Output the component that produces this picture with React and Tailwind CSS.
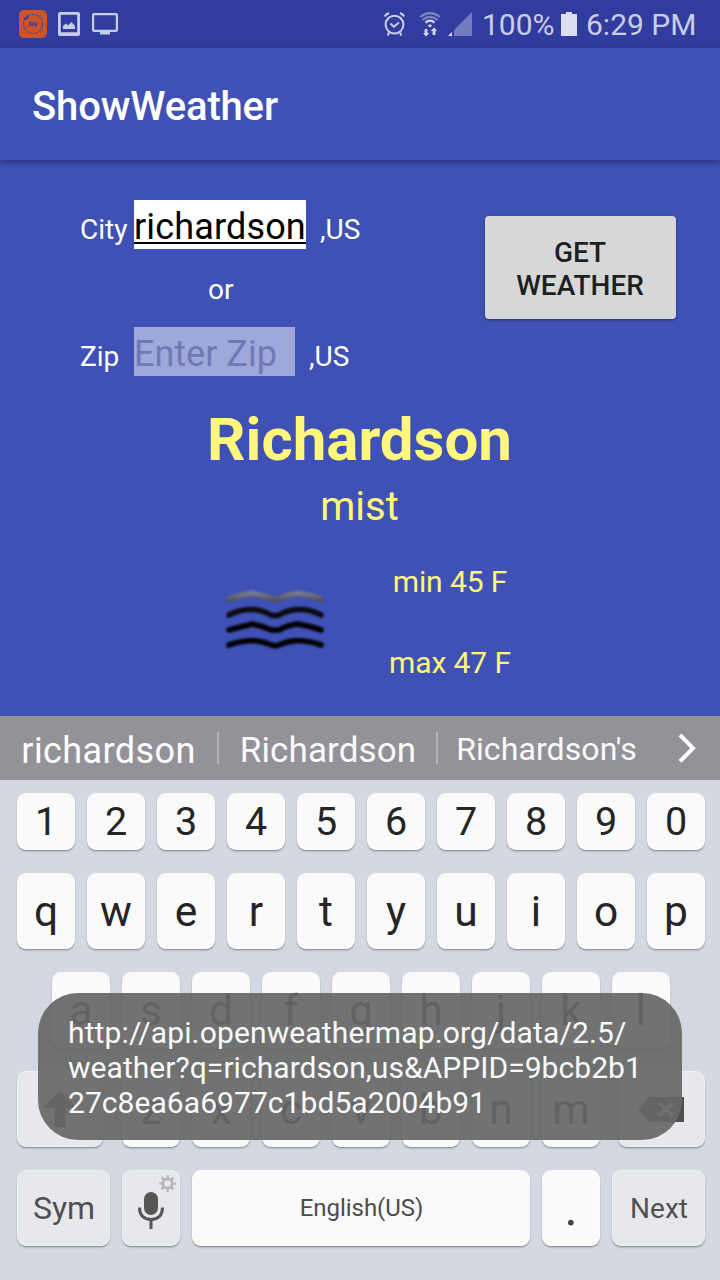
import React from "react";

function StatusBar() {
  return (
    <div className="flex h-12 items-start bg-[#303d9f] text-[30px] leading-[50px] text-[#cbcee6]">
      <svg className="ml-[19px] mt-[10px]" width="28" height="28" viewBox="0 0 28 28">
        <rect width="28" height="28" rx="5" fill="#cc542b" />
        <circle cx="14" cy="14" r="9.5" fill="none" stroke="#303d9f" strokeWidth="0.9" strokeDasharray="3.6 1.1" />
        <path d="M5.5 9.5 9.5 6" stroke="#303d9f" strokeWidth="2.2" />
        <path d="M10.500 16.200v-3.700h3v3.700M12 13.500v2.700M15.200 16.200v-3.700l1.600 2v1.700M17.700 12.200v4" fill="none" stroke="#303d9f" strokeWidth="1" />
      </svg>
      <svg className="ml-[11px] mt-3" width="22" height="24" viewBox="0 0 22 24">
        <path fillRule="evenodd" fill="#c9cce6" d="M2 0h18a2 2 0 0 1 2 2v20a2 2 0 0 1-2 2H2a2 2 0 0 1-2-2V2a2 2 0 0 1 2-2Zm.8 2.8v17.4h16.4V2.8Z" />
        <path fill="#c9cce6" d="M5 17v-3l3-2.5 2 2 3.5-3.5 3.5 4v3Z" />
      </svg>
      <svg className="ml-3 mt-[13px]" width="26" height="22" viewBox="0 0 26 22">
        <path fillRule="evenodd" fill="#c9cce6" d="M2 0h22a2 2 0 0 1 2 2v15a2 2 0 0 1-2 2h-6v2.5H8V19H2a2 2 0 0 1-2-2V2a2 2 0 0 1 2-2Zm.2 2.2v14.5h21.6V2.2Z" />
      </svg>

      <svg className="ml-[266px] mt-3" width="21" height="24" viewBox="0 0 21 24" fill="none" stroke="#cfd2e9">
        <circle cx="10.5" cy="12.6" r="8.9" strokeWidth="2" />
        <path d="m6.5 11.5 3.3 3.3 5.2-4.4" strokeWidth="1.9" />
        <path d="M.8 4.5Q2 2 5 1M20.2 4.5Q19 2 16 1M5 20.5l-1.3 3M16 20.5l1.3 3" strokeWidth="2" />
      </svg>
      <svg className="ml-[14px] mt-[11px]" width="22" height="26" viewBox="0 0 22 26" fill="none">
        <path d="M1 6Q11-1.8 21 6M3.4 9Q11 2.8 18.6 9" stroke="#7b84c4" strokeWidth="2" />
        <path d="M6.5 11.6Q11 7.6 15.5 11.6" stroke="#d5d7ec" strokeWidth="2.2" />
        <path d="M8.8 14.4Q11 12.4 13.2 14.4L11 16.6Z" fill="#d5d7ec" />
        <path d="M5.600 18h2.800v4H10.200l-3.200 3.400L4 22h1.600ZM13.600 24v-4H11.800l3.200-3.600 3.200 3.600h-1.800v4Z" fill="#d5d7ec" />
      </svg>
      <svg className="ml-[7px] mt-3" width="24" height="24" viewBox="0 0 24 24">
        <path d="M24 0v24H6V18Z" fill="#737cc0" />
        <path d="M4 20v4H0Z" fill="#dddff0" />
      </svg>
      <span className="ml-[10px] w-[73px]">100%</span>
      <svg className="ml-[6px] mt-3" width="16" height="24" viewBox="0 0 16 24">
        <path d="M5 0h6v2h5v22H0V2h5Z" fill="#dddff0" />
      </svg>
      <span className="ml-[9px] whitespace-nowrap">6:29 PM</span>
    </div>
  );
}

function AppBar() {
  return (
    <header className="relative h-28 bg-[#3f51b5] px-8 text-[40px] font-medium leading-[118px] tracking-[-0.15px] text-white shadow-[0_2px_6px_rgba(0,0,0,0.4)]">
      ShowWeather
    </header>
  );
}

function SearchForm() {
  return (
    <section className="flex h-[242px] text-[28px] text-white">
      <div className="w-[485px] pl-20 pt-10">
        <div className="flex h-[49px] items-baseline">
          <span className="w-[54px]">City</span>
          <div className="relative h-[49px] w-[172px] whitespace-nowrap bg-white text-[36px] leading-[55px] tracking-[0.15px] text-black">
            richardson
            <div className="absolute left-0 top-[42px] h-[2px] w-full bg-black" />
          </div>
          <span className="ml-[14px]">,US</span>
        </div>
        <div className="h-[78px] pl-32 leading-[81px]">or</div>
        <div className="flex h-[49px] items-baseline">
          <span className="w-[54px]">Zip</span>
          <div className="h-[49px] w-[161px] whitespace-nowrap bg-[#9fa8da] text-[36px] leading-[55px] text-[#6f7ab4]">
            Enter Zip
          </div>
          <span className="ml-[14px]">,US</span>
        </div>
      </div>
      <button className="mt-14 h-[103px] w-[191px] rounded-[4px] bg-[#d6d8d7] pr-px pt-[2px] text-[28px] font-medium leading-[33px] text-[#1e1f1f] shadow-[0_1px_3px_rgba(0,0,0,0.35)]">
        GET
        <br />
        WEATHER
      </button>
    </section>
  );
}

function MistIcon() {
  return (
    <svg className="ml-[222px] mt-5 blur-[0.8px]" width="106" height="72" viewBox="0 0 106 72" fill="none" strokeWidth="5.6" strokeLinecap="round" strokeLinejoin="round">
      <defs>
        <linearGradient id="haze" x1="0" y1="6" x2="0" y2="17" gradientUnits="userSpaceOnUse">
          <stop offset="0" stopColor="#8588a4" />
          <stop offset="0.5" stopColor="#6f6f78" />
          <stop offset="1" stopColor="#4c4c50" />
        </linearGradient>
      </defs>
      <path d="M7 15Q18 11 30.500 9.500Q42 12 48 14.500Q53 16 58 14.500Q66 11 75.500 9.500Q88 11 99 15" stroke="url(#haze)" />
      <path d="M7 31Q18 25 30.500 25.500Q40 26 48 30.500Q53 33 58 30.500Q66 26 75.500 25.500Q88 25 99 31" stroke="#0b0b10" />
      <path d="M7 46Q18 43 30.500 40Q40 42 48 45.500Q53 47 58 45.500Q66 41 75.500 40Q88 42 99 46" stroke="#020204" />
      <path d="M7 61Q18 57 30.500 56.500Q40 57 48 60.500Q53 63 58 60.500Q66 57 75.500 56.500Q88 57 99 61" stroke="#020204" />
    </svg>
  );
}

function Result() {
  return (
    <section className="h-[314px] text-center text-[#fff67c]">
      <h1 className="pr-px pt-[2px] text-[60px] font-bold leading-[72px]">Richardson</h1>
      <p className="mt-[7px] pr-px text-[40px] leading-[48px]">mist</p>
      <div className="mt-[33px] flex text-[30px] leading-[35px]">
        <MistIcon />
        <div className="ml-[42px] flex w-[160px] flex-col gap-[46px] tracking-[-0.1px]">
          <p>min 45 F</p>
          <p>max 47 F</p>
        </div>
      </div>
    </section>
  );
}

function Suggestions() {
  return (
    <div className="flex h-16 items-start bg-[#949299] text-[#fafafa]">
      <span className="w-[217px] text-center text-[36px] leading-[70px] tracking-[0.4px] text-white">richardson</span>
      <i className="mt-4 h-8 w-[2px] bg-[#b2b1b4]" />
      <span className="w-[217px] pl-px text-center text-[35px] leading-[69px] tracking-[0.1px]">Richardson</span>
      <i className="mt-4 h-8 w-[2px] bg-[#b2b1b4]" />
      <span className="w-[217px] text-center text-[32px] leading-[67px] tracking-[0.1px]">Richardson's</span>
      <svg className="ml-[22px] mt-[17px]" width="20" height="31" viewBox="0 0 20 31" fill="none">
        <path d="m3 2 13 13.200-13 13.200" stroke="#fff" strokeWidth="4" />
      </svg>
    </div>
  );
}

const keyBase =
  "relative shrink-0 rounded-[9px] text-center shadow-[0_1px_1px_#8f9197,0_2px_2px_rgba(0,0,0,0.12),inset_0_0_0_1px_rgba(255,255,255,0.35)] ";

function Key({ className, children }) {
  return <div className={keyBase + className}>{children}</div>;
}

function LetterKeys({ letters }) {
  return [...letters].map((c) => (
    <Key key={c} className="h-19 w-[58px] bg-[#fafafa] text-[42.5px] leading-[78px] text-[#252525]">
      {c}
    </Key>
  ));
}

function Keyboard() {
  return (
    <div className="h-[500px] bg-[#d5d8e0] pl-[17px] pt-[13px]">
      <div className="flex gap-3">
        {[..."1234567890"].map((c) => (
          <Key key={c} className="h-[57px] w-[58px] bg-[#fafafa] text-[39.5px] leading-[58px] text-[#252525]">
            {c}
          </Key>
        ))}
      </div>
      <div className="mt-[23px] flex gap-3">
        <LetterKeys letters="qwertyuiop" />
      </div>
      <div className="mt-[23px] flex gap-3 pl-[35px]">
        <LetterKeys letters="asdfghjkl" />
      </div>
      <div className="mt-[23px] flex gap-3">
        <Key className="mr-[7px] h-19 w-[86px] bg-[#e7e8ec]">
          <svg className="ml-[26px] mt-5" width="34" height="36" viewBox="0 0 34 36">
            <path d="M17 0 34 17H22.500V36h-11V17H0Z" fill="#4f4f4f" />
          </svg>
        </Key>
        <LetterKeys letters="zxcvbnm" />
        <Key className="ml-[6px] h-19 w-[87px] bg-[#e7e8ec]">
          <svg className="ml-5 mt-[26px]" width="46" height="25" viewBox="0 0 46 25">
            <path d="M11 0h35v25H11L0 12.500Z" fill="#4f4f4f" />
            <path d="m21 6 14 13M35 6 21 19" stroke="#e7e8ec" strokeWidth="3.500" />
          </svg>
        </Key>
      </div>
      <div className="mt-[23px] flex gap-3">
        <Key className="h-19 w-[93px] bg-[#e7e8ec] pl-px text-[32px] leading-[77px] text-[#505050]">Sym</Key>
        <Key className="h-19 w-[58px] bg-[#e7e8ec]">
          <svg width="58" height="76" viewBox="0 0 58 76" fill="none">
            <rect x="22" y="22" width="14" height="23" rx="7" fill="#555" />
            <path d="M17.500 37.500c0 8 4.500 12 11.500 12s11.500-4 11.500-12M29 49.500V59" stroke="#555" strokeWidth="3" />
            <circle cx="45.500" cy="13.500" r="4.700" stroke="#b4b5b9" strokeWidth="2.800" />
            <circle cx="45.500" cy="13.500" r="7" stroke="#b4b5b9" strokeWidth="2.600" strokeDasharray="2.500 2.998" strokeDashoffset="1.250" />
          </svg>
        </Key>
        <Key className="h-19 w-[338px] bg-[#fafafa] pl-px text-[24px] leading-[76px] tracking-[-0.05px] text-[#4c4c4c]">English(US)</Key>
        <Key className="h-19 w-[58px] bg-[#fafafa] text-[52px] leading-[76px] text-[#454545]">.</Key>
        <Key className="h-19 w-[93px] bg-[#e7e8ec] pl-px text-[28px] leading-[77px] text-[#505050]">Next</Key>
      </div>
    </div>
  );
}

function Toast() {
  return (
    <div className="absolute left-[38px] top-[993px] h-[147px] w-[644px] whitespace-nowrap rounded-[40px] bg-[#676767]/93 pl-[30px] pt-[22px] text-[30px] leading-[35px] text-[#fafafa]">
      <p className="tracking-[0.14px]">http://api.openweathermap.org/data/2.5/</p>
      <p className="tracking-[0.05px]">weather?q=richardson,us&amp;APPID=9bcb2b1</p>
      <p className="tracking-[0.06px]">27c8ea6a6977c1bd5a2004b91</p>
    </div>
  );
}

export default function App() {
  return (
    <div className="relative h-[1280px] w-[720px] overflow-hidden bg-[#3f51b5] font-['Roboto',sans-serif]">
      <StatusBar />
      <AppBar />
      <SearchForm />
      <Result />
      <Suggestions />
      <Keyboard />
      <Toast />
    </div>
  );
}
